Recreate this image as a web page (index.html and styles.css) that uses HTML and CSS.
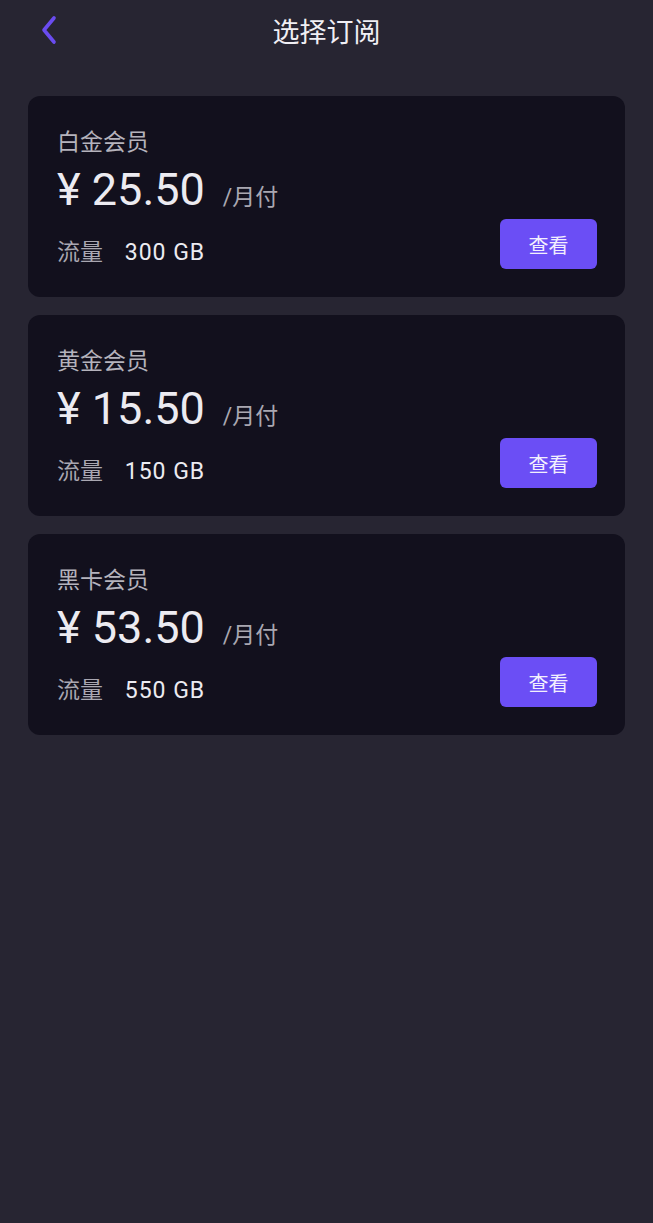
FILE: index.html
```html
<!DOCTYPE html>
<html lang="zh-CN">
<head>
    <meta charset="UTF-8">
    <meta name="viewport" content="width=device-width, initial-scale=1.0">
    <title>选择订阅</title>
    <link rel="stylesheet" href="styles.css">
</head>
<body>
    <header class="topbar">
        <button class="back" aria-label="返回">
            <svg width="20" height="30" viewBox="0 0 20 30">
                <path d="M15 3 L5 15 L15 27" fill="none" stroke="#6a4cf0" stroke-width="3.6" stroke-linecap="round" stroke-linejoin="round"/>
            </svg>
        </button>
        <h1 class="title">选择订阅</h1>
    </header>

    <main class="plans">
        <div class="plan">
            <div class="plan-info">
                <div class="plan-name">白金会员</div>
                <div class="plan-price">
                    <span class="amount">¥ 25.50</span>
                    <span class="period">/月付</span>
                </div>
                <div class="plan-traffic">
                    <span class="label">流量</span>
                    <span class="value">300 GB</span>
                </div>
            </div>
            <button class="view">查看</button>
        </div>

        <div class="plan">
            <div class="plan-info">
                <div class="plan-name">黄金会员</div>
                <div class="plan-price">
                    <span class="amount">¥ 15.50</span>
                    <span class="period">/月付</span>
                </div>
                <div class="plan-traffic">
                    <span class="label">流量</span>
                    <span class="value">150 GB</span>
                </div>
            </div>
            <button class="view">查看</button>
        </div>

        <div class="plan">
            <div class="plan-info">
                <div class="plan-name">黑卡会员</div>
                <div class="plan-price">
                    <span class="amount">¥ 53.50</span>
                    <span class="period">/月付</span>
                </div>
                <div class="plan-traffic">
                    <span class="label">流量</span>
                    <span class="value">550 GB</span>
                </div>
            </div>
            <button class="view">查看</button>
        </div>
    </main>
</body>
</html>
```

FILE: styles.css
```css
* {
    margin: 0;
    padding: 0;
    box-sizing: border-box;
    font-family: Roboto, 'Noto Sans CJK SC', sans-serif;
}

body {
    min-height: 100vh;
    background: #272532;
    color: #e9e8ee;
}

.topbar {
    position: relative;
    height: 60px;
    display: flex;
    justify-content: center;
    align-items: center;
}

.back {
    position: absolute;
    left: 37px;
    top: 15px;
    width: 24px;
    height: 30px;
    border: none;
    background: transparent;
    cursor: pointer;
}

.title {
    font-size: 27px;
    font-weight: 400;
    color: #f0eff4;
}

.plans {
    display: flex;
    flex-direction: column;
    gap: 18px;
    padding: 36px 28px 0;
}

.plan {
    background: #12101d;
    border-radius: 12px;
    height: 201px;
    padding: 28px 28px 28px 29px;
    display: flex;
    justify-content: space-between;
    align-items: flex-end;
}

.plan-name {
    font-size: 23px;
    line-height: 32px;
    color: #b5b3bc;
}

.plan-price {
    display: flex;
    align-items: baseline;
    margin-top: 2px;
    height: 58px;
}

.amount {
    font-size: 45px;
    font-weight: 400;
    color: #ecebf1;
    line-height: 58px;
}

.period {
    font-size: 23px;
    color: #a9a7b1;
    margin-left: 18px;
}

.plan-traffic {
    margin-top: 18px;
    font-size: 23px;
    line-height: 32px;
}

.label {
    color: #a9a7b1;
}

.value {
    margin-left: 16px;
    color: #ecebf1;
    letter-spacing: 1px;
}

.view {
    width: 97px;
    height: 50px;
    border: none;
    border-radius: 6px;
    background: #6b4ef5;
    color: #f2effe;
    font-size: 20px;
    cursor: pointer;
}

.view:hover {
    background: #5c3ff0;
}
```
